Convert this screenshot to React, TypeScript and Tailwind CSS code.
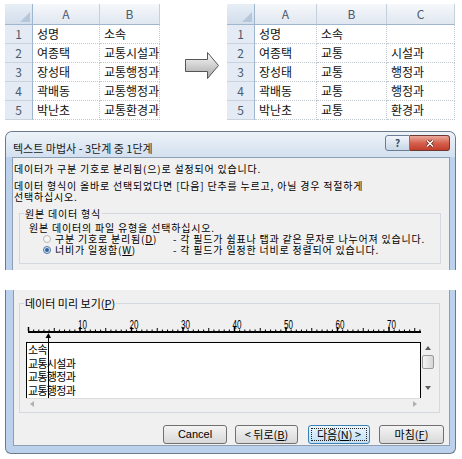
import React from "react";

type Row = string[];

const leftRows: Row[] = [
  ["성명", "소속"],
  ["여종택", "교통시설과"],
  ["장성태", "교통행정과"],
  ["곽배동", "교통행정과"],
  ["박난초", "교통환경과"],
];

const rightRows: Row[] = [
  ["성명", "소속", ""],
  ["여종택", "교통", "시설과"],
  ["장성태", "교통", "행정과"],
  ["곽배동", "교통", "행정과"],
  ["박난초", "교통", "환경과"],
];

const previewRows = ["소속", "교통시설과", "교통행정과", "교통행정과"];

function Corner() {
  return (
    <div className="h-[21px] border-r border-b border-[#9eb6ce] bg-linear-to-b from-[#e7eef6] to-[#d3deeb] flex items-end justify-end p-[2px]">
      <svg width="10" height="10" viewBox="0 0 10 10">
        <path d="M10 0 L10 10 L0 10 Z" fill="#b6c7db" />
      </svg>
    </div>
  );
}

function Sheet({ grid, cols, rows }: { grid: string; cols: string[]; rows: Row[] }) {
  return (
    <div className={grid}>
      <Corner />
      {cols.map((c) => (
        <div
          key={c}
          className="h-[21px] border-r border-r-[#c5d0dc] border-b border-b-[#9eb6ce] bg-linear-to-b from-[#f6f8fb] to-[#e0e7f0] flex items-center justify-center text-[12px] text-[#4a5a70]"
        >
          {c}
        </div>
      ))}
      {rows.map((r, i) => (
        <React.Fragment key={i}>
          <div className="h-[19px] border-r border-r-[#9eb6ce] border-b border-b-[#c9d3de] bg-[#e4ebf4] flex items-center justify-center text-[12px] text-[#4a5a70]">
            {i + 1}
          </div>
          {r.map((v, j) => (
            <div
              key={j}
              className="h-[19px] border-r border-b border-dotted border-[#c3c9d1] pl-[4px] flex items-center text-[12px] text-[#111] whitespace-nowrap overflow-hidden"
            >
              {v}
            </div>
          ))}
        </React.Fragment>
      ))}
    </div>
  );
}

function BlockArrow() {
  return (
    <svg width="34" height="27" viewBox="0 0 34 27">
      <defs>
        <linearGradient id="arrowFill" x1="0" y1="0" x2="0" y2="1">
          <stop offset="0" stopColor="#fbfbfb" />
          <stop offset="1" stopColor="#a6a6a6" />
        </linearGradient>
      </defs>
      <path
        d="M0.5 7.5 H22.5 V0.5 L33.5 13.5 L22.5 26.5 V19.5 H0.5 Z"
        fill="url(#arrowFill)"
        stroke="#555"
      />
    </svg>
  );
}

function Radio({ on }: { on?: boolean }) {
  return on ? (
    <span className="w-[8px] h-[8px] shrink-0 rounded-full border border-[#4a76a3] bg-[#d9e6f3] flex items-center justify-center">
      <span className="w-[4px] h-[4px] rounded-full bg-[#2d62a0]" />
    </span>
  ) : (
    <span className="w-[8px] h-[8px] shrink-0 rounded-full border border-[#b8b8b8] bg-[#f6f6f6]" />
  );
}

function Ruler() {
  const x0 = 3.5;
  const step = 5.15;
  const ticks = [];
  for (let i = 0; i <= 76; i++) {
    const x = x0 + i * step;
    const h = i % 10 === 0 ? 4 : i % 5 === 0 ? 3 : 1.5;
    const w = i % 10 === 0 ? 1.5 : 1;
    ticks.push(<rect key={i} x={x - w / 2} y={15 - h} width={w} height={h} fill="#000" />);
  }
  const labels = [10, 20, 30, 40, 50, 60, 70];
  return (
    <svg width="400" height="20" viewBox="0 0 400 20" className="block mt-[12px] ml-[5px]">
      {ticks}
      <rect x="3" y="15" width="393" height="2" fill="#000" />
      {labels.map((n) => (
        <text
          key={n}
          x={x0 + n * step + 2.5}
          y="12.5"
          textAnchor="middle"
          fontSize="13"
          fontFamily="Liberation Sans, sans-serif"
          textLength="9"
          lengthAdjust="spacingAndGlyphs"
          fill="#000"
        >
          {n}
        </text>
      ))}
    </svg>
  );
}

function Tri({ dir }: { dir: "up" | "down" | "left" | "right" }) {
  const d = {
    up: "M0 4 L3 0 L6 4 Z",
    down: "M0 0 L6 0 L3 4 Z",
    left: "M4 0 L4 6 L0 3 Z",
    right: "M0 0 L4 3 L0 6 Z",
  }[dir];
  const horiz = dir === "left" || dir === "right";
  return (
    <svg width={horiz ? 4 : 6} height={horiz ? 6 : 4} viewBox={horiz ? "0 0 4 6" : "0 0 6 4"}>
      <path d={d} fill={horiz ? "#b0b0b0" : "#606060"} />
    </svg>
  );
}

function Button({ children, focused, className }: { children: React.ReactNode; focused?: boolean; className: string }) {
  return focused ? (
    <div className={`h-[19px] rounded-[3px] border border-[#3c7fb1] bg-linear-to-b from-[#eaf6fd] to-[#bfe0f5] p-[2px] ${className}`}>
      <div className="h-full border border-dotted border-[#222] flex items-center justify-center text-[11px] leading-[11px] whitespace-nowrap">
        {children}
      </div>
    </div>
  ) : (
    <div className={`h-[19px] rounded-[3px] border border-[#707070] bg-linear-to-b from-[#f4f4f4] to-[#d8d8d8] flex items-center justify-center text-[11px] leading-[11px] whitespace-nowrap ${className}`}>
      {children}
    </div>
  );
}

export default function App() {
  return (
    <div className="w-[462px] h-[459px] bg-white overflow-hidden font-['Noto_Sans_CJK_KR','Noto_Sans',sans-serif] text-black">
      {/* before / after sheets */}
      <div className="h-[131px] flex items-start pt-[4px]">
        <div className="ml-[5px] w-[155px] overflow-hidden">
          <Sheet grid="grid grid-cols-[28px_67px_60px]" cols={["A", "B"]} rows={leftRows} />
        </div>
        <div className="ml-[25px] mt-[48px]">
          <BlockArrow />
        </div>
        <div className="ml-[8px]">
          <Sheet grid="grid grid-cols-[28px_62px_70px_68px]" cols={["A", "B", "C"]} rows={rightRows} />
        </div>
      </div>

      {/* wizard, upper part */}
      <div className="ml-[5px] w-[451px] h-[139px] border border-b-0 border-[#6b7b8e] rounded-t-[7px] bg-[#bcd2ec] flex flex-col overflow-hidden">
        <div className="h-[25px] shrink-0 flex justify-between bg-linear-to-b from-[#edf2f8] to-[#d3e0ef]">
          <div className="pl-[7px] pt-[11px] text-[11px] leading-[11px] text-[#1b1b1b] whitespace-nowrap">
            텍스트 마법사 - 3단계 중 1단계
          </div>
          <div className="flex mt-[3px] mr-[5px] h-[16px]">
            <div className="w-[25px] h-[16px] rounded-l-[3px] border border-[#6c7d93] bg-linear-to-b from-[#f1f5fa] to-[#c8d6e7] flex items-center justify-center text-[10px] font-bold leading-[10px] text-[#3a4a5e]">
              ?
            </div>
            <div className="w-[40px] h-[16px] rounded-r-[3px] border border-l-0 border-[#6c3a33] bg-linear-to-b from-[#eaa99c] via-[#d5614e] to-[#c23d2a] flex items-center justify-center">
              <svg width="10" height="9" viewBox="0 0 10 9">
                <path d="M2 1.5 L8 7.5 M8 1.5 L2 7.5" stroke="#5a1d14" strokeWidth="3" />
                <path d="M2 1.5 L8 7.5 M8 1.5 L2 7.5" stroke="#fff" strokeWidth="1.6" />
              </svg>
            </div>
          </div>
        </div>
        <div className="flex-1 flex pl-[6px] pr-[5px]">
          <div className="flex-1 border border-b-0 border-[#8c9fb5] bg-[#f0f0f0] pl-[1px] pt-[5px] text-[10px] leading-[11px] tracking-[0.8px] whitespace-nowrap">
            <p>데이터가 구분 기호로 분리됨(으)로 설정되어 있습니다.</p>
            <p className="mt-[6px]">
              데이터 형식이 올바로 선택되었다면 [다음] 단추를 누르고, 아닐 경우 적절하게
              <br />
              선택하십시오.
            </p>
            <div className="relative mt-[11px] ml-[5px] mr-[8px] h-[51px] border border-[#d3d9df]">
              <span className="absolute -top-[6px] left-[4px] px-[1px] bg-[#f0f0f0]">원본 데이터 형식</span>
              <div className="pl-[9px] pt-[8px]">원본 데이터의 파일 유형을 선택하십시오.</div>
              <div className="flex items-center h-[11px] pl-[23px]">
                <div className="w-[130px] flex items-center gap-[4px]">
                  <Radio />
                  <span>
                    구분 기호로 분리됨(<span className="underline">D</span>)
                  </span>
                </div>
                <span>- 각 필드가 쉼표나 탭과 같은 문자로 나누어져 있습니다.</span>
              </div>
              <div className="flex items-center h-[11px] pl-[23px]">
                <div className="w-[130px] flex items-center gap-[4px]">
                  <Radio on />
                  <span>
                    너비가 일정함(<span className="underline">W</span>)
                  </span>
                </div>
                <span>- 각 필드가 일정한 너비로 정렬되어 있습니다.</span>
              </div>
            </div>
          </div>
        </div>
      </div>

      {/* wizard, lower part */}
      <div className="mt-[20px] ml-[5px] w-[451px] h-[164px] border border-t-0 border-[#6b7b8e] rounded-b-[6px] bg-[#bcd2ec] flex pl-[7px] pr-[5px] pb-[7px]">
        <div className="flex-1 border border-t-0 border-[#8c9fb5] bg-[#f0f0f0] flex flex-col text-[11px] leading-[11px]">
          <div className="relative mt-[13px] ml-[5px] w-[421px] h-[110px] border border-[#d3d9df]">
            <span className="absolute -top-[6px] left-[4px] px-[1px] bg-[#f0f0f0] whitespace-nowrap">
              데이터 미리 보기(<span className="underline">P</span>)
            </span>
            <Ruler />
            <div className="flex mt-[6px] ml-[6px]">
              <div className="w-[395px] h-[56px] border-t border-x border-black bg-white overflow-hidden">
                <div className="pl-[1px] text-[11px] leading-[13.5px] tracking-[-0.7px]">
                  {previewRows.map((r, i) => (
                    <div key={i}>{r}</div>
                  ))}
                </div>
              </div>
              <div className="w-[14px] h-[56px] flex flex-col items-center">
                <div className="mt-[4px]">
                  <Tri dir="up" />
                </div>
                <div className="mt-[5px] w-[12px] h-[14px] rounded-[2px] border border-[#9a9a9a] bg-linear-to-r from-[#f4f4f4] to-[#d6d6d6]" />
                <div className="mt-auto mb-[8px]">
                  <Tri dir="down" />
                </div>
              </div>
            </div>
            <div className="ml-[6px] w-[395px] h-[10px] border-t border-[#dcdcdc] flex items-center justify-between px-[4px]">
              <Tri dir="left" />
              <Tri dir="right" />
            </div>
            {/* column break marker */}
            <svg width="7" height="65" viewBox="0 0 7 65" className="absolute left-[24px] top-[29px]">
              <path d="M4.5 0 L1.5 5 L7 5 Z" fill="#000" />
              <rect x="4" y="3" width="1" height="62" fill="#000" />
            </svg>
          </div>

          <div className="mt-[12px] flex justify-end pr-[5px] h-[19px]">
            <Button className="w-[64px] font-['Liberation_Sans',sans-serif]">Cancel</Button>
            <Button className="ml-[8px] w-[63px]">
              &lt; 뒤로(<span className="underline">B</span>)
            </Button>
            <Button focused className="ml-[10px] w-[62px]">
              다음(<span className="underline">N</span>) &gt;
            </Button>
            <Button className="ml-[9px] w-[65px]">
              마침(<span className="underline">F</span>)
            </Button>
          </div>
        </div>
      </div>
    </div>
  );
}
